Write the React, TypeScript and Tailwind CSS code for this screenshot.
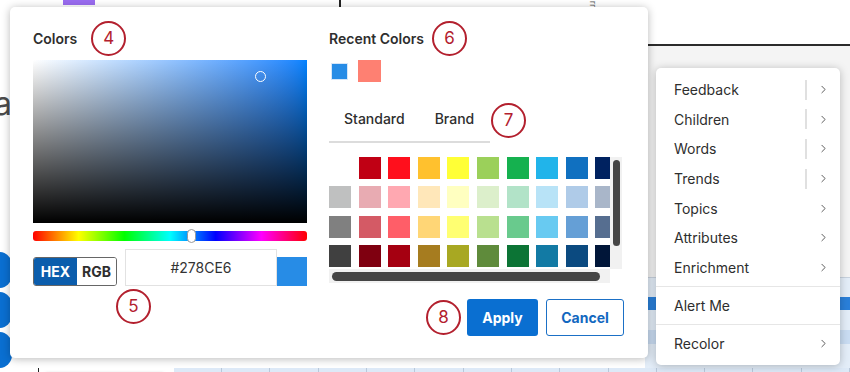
import { ChevronRight } from "lucide-react";

const palette: (string | null)[][] = [
  [null, "#c00014", "#ff0f1c", "#ffc12e", "#ffff36", "#9bd05a", "#15b14f", "#21b4ea", "#1070c0", "#002260"],
  ["#bfc0c0", "#e8abb2", "#ffa8b1", "#ffe7b9", "#ffffc0", "#dcefcb", "#b2e3c8", "#b8e3f7", "#afcbe8", "#a9b6c9"],
  ["#808080", "#d45a65", "#ff5e68", "#ffd676", "#ffff72", "#b9e08f", "#69ca8d", "#68caf1", "#659fd6", "#566e90"],
  ["#404040", "#7f0010", "#a50011", "#a67c1f", "#a8a822", "#5f8b3b", "#0c7435", "#127aa4", "#0b4a80", "#011639"],
];

const menuItems = [
  { label: "Feedback", bar: true, arrow: true },
  { label: "Children", bar: true, arrow: true },
  { label: "Words", bar: true, arrow: true },
  { label: "Trends", bar: true, arrow: true },
  { label: "Topics", bar: false, arrow: true },
  { label: "Attributes", bar: false, arrow: true },
  { label: "Enrichment", bar: false, arrow: true },
];

function Marker({ n }: { n: number }) {
  return (
    <div className="flex h-[35px] w-[35px] shrink-0 items-center justify-center rounded-full border-[2.5px] border-[#b3202e] text-[17px] leading-none text-[#b3202e]">
      {n}
    </div>
  );
}

function MenuRow({ label, bar, arrow }: { label: string; bar?: boolean; arrow?: boolean }) {
  return (
    <div className="flex h-[29.6px] items-center pl-[18px] pr-[10px] text-[14px] text-[#2e2e2e]">
      <span className="flex-1">{label}</span>
      {bar && <div className="mr-[10px] h-[20px] w-[2px] bg-[#e0e0e0]" />}
      {arrow && <ChevronRight size={13} strokeWidth={1.6} className="text-[#444]" />}
    </div>
  );
}

export default function App() {
  return (
    <div className="relative h-[372px] w-[850px] overflow-hidden bg-white font-['Inter',sans-serif]">
      {/* page behind */}
      <div className="flex h-full flex-col">
        <div className="flex h-[46px] shrink-0">
          <div className="flex w-[645px] items-start">
            <div className="ml-[63px] h-[5px] w-[32px] bg-[#9a6cf0]" />
            <div className="ml-[244px] h-[10px] w-[2px] bg-[#222]" />
            <span className="ml-[248px] mt-[1px] rotate-90 text-[8px] leading-none text-[#555]">rn</span>
          </div>
          <div className="flex-1 border-b-2 border-[#2b2b2b]" />
        </div>
        <div className="flex flex-1">
          <div className="flex w-[48px] flex-col">
            <span className="-ml-[6px] mt-[42px] text-[32px] leading-none text-[#4b4b4b]">a</span>
            <div className="mt-[132px] flex flex-col gap-[4px]">
              <div className="-ml-[14px] h-[36px] w-[26px] rounded-full bg-[#0a6fd1]" />
              <div className="-ml-[14px] h-[36px] w-[26px] rounded-full bg-[#0a6fd1]" />
              <div className="-ml-[14px] h-[36px] w-[26px] rounded-full bg-[#0a6fd1]" />
            </div>
          </div>
          <div className="flex-1" />
          <div className="flex w-[205px] flex-col bg-[#f4f4f4]">
            <div className="mt-[231px] flex flex-1 flex-col border-t border-[#c8d2de] bg-[#e3edf8]">
              <div className="mt-[19px] h-[13px] bg-[#2a7fd9]" />
              <div className="mt-[20px] h-[14px] bg-[#c9dcf2]" />
            </div>
          </div>
        </div>
        <div className="flex h-[14px] shrink-0">
          <div className="w-[48px]" />
          <div className="w-[2px] bg-[#222]" />
          <div className="ml-[6px] mt-[4px] h-[6px] w-[151px] rounded-sm bg-[#e6e6e6] blur-[1px]" />
          <div className="ml-[10px] flex flex-1 bg-[#dde9f7]">
            {Array.from({ length: 14 }).map((_, i) => (
              <div key={i} className="w-[48.3px] shrink-0 border-r border-[#b9c8da]" />
            ))}
          </div>
        </div>
      </div>

      {/* color dialog */}
      <div className="absolute left-[10px] top-[7px] flex h-[351px] w-[638px] gap-[22px] rounded-[5px] bg-white pl-[23px] pr-[24px] pt-[14px] shadow-[0_1px_8px_rgba(0,0,0,0.28)]">
        <div className="flex w-[274px] flex-col">
          <div className="flex items-center">
            <span className="text-[14px] font-semibold text-[#2e2e2e]">Colors</span>
            <div className="ml-[14px]">
              <Marker n={4} />
            </div>
          </div>
          <div className="relative mt-[4px] h-[163px] w-[274px] bg-linear-to-r from-white to-[#0082ff]">
            <div className="h-full w-full bg-linear-to-t from-black to-transparent" />
            <div className="absolute left-[222px] top-[11px] h-[11px] w-[11px] rounded-full border-[1.5px] border-white" />
          </div>
          <div className="relative mt-[8px] h-[10px] w-[274px] rounded-[3px] bg-[linear-gradient(to_right,#ff0000,#ff8000,#ffff00,#80ff00,#00ff00,#00ff80,#00ffff,#0080ff,#0000ff,#8000ff,#ff00ff,#ff0080,#ff0000)]">
            <div className="absolute -top-[2px] left-[154px] h-[14px] w-[9px] rounded-full border border-[#999] bg-white" />
          </div>
          <div className="mt-[8px] flex h-[37px] items-end">
            <div className="flex h-[29px] w-[84px] overflow-hidden rounded-[3px] border border-[#666] text-[14px] font-bold">
              <div className="flex w-[43px] items-center justify-center bg-[#0b5dac] text-white">HEX</div>
              <div className="flex flex-1 items-center justify-center bg-white text-[#2e2e2e]">RGB</div>
            </div>
            <div className="ml-[8px] flex h-[37px] w-[152px] items-center justify-center border border-[#e2e2e2] text-[14px] text-[#333]">
              #278CE6
            </div>
            <div className="h-[29px] w-[30px] bg-[#278ce6]" />
          </div>
          <div className="ml-[83px] mt-[3px]">
            <Marker n={5} />
          </div>
        </div>

        <div className="flex w-[295px] flex-col">
          <div className="flex items-center">
            <span className="text-[14px] font-semibold text-[#2e2e2e]">Recent Colors</span>
            <div className="ml-[8px]">
              <Marker n={6} />
            </div>
          </div>
          <div className="mt-[4px] flex h-[22px] items-center gap-[10px]">
            <div className="ml-[2px] h-[17px] w-[17px] border border-[#d6e6f8] bg-[#278ce6]" />
            <div className="h-[22px] w-[23px] bg-[#fe8072]" />
          </div>
          <div className="mt-[15px] flex items-center">
            <div className="flex h-[46px] w-[161px] items-center gap-[30px] border-b-2 border-[#dcdcdc] pb-[2px] pl-[15px] text-[14px] font-medium text-[#2e2e2e]">
              <span>Standard</span>
              <span>Brand</span>
            </div>
            <div className="ml-[1px]">
              <Marker n={7} />
            </div>
          </div>
          <div className="mt-[14px] flex w-[293px] flex-col">
            <div className="flex">
              <div className="h-[112px] w-[281px] overflow-hidden">
                <div className="flex w-[320px] flex-col gap-[7.4px]">
                  {palette.map((row, r) => (
                    <div key={r} className="flex gap-[7.6px]">
                      {row.map((c, i) =>
                        c ? (
                          <div key={i} className="h-[22px] w-[22px] shrink-0" style={{ backgroundColor: c }} />
                        ) : (
                          <div key={i} className="h-[22px] w-[22px] shrink-0" />
                        )
                      )}
                    </div>
                  ))}
                </div>
              </div>
              <div className="flex h-[112px] w-[12px] justify-center bg-[#f1f1f1] pt-[3px]">
                <div className="h-[86px] w-[7px] rounded-full bg-[#454545]" />
              </div>
            </div>
            <div className="flex h-[14px] w-[281px] items-center bg-[#f1f1f1] pl-[3px]">
              <div className="h-[9px] w-[268px] rounded-full bg-[#454545]" />
            </div>
          </div>
          <div className="mt-[16px] flex items-center justify-end">
            <Marker n={8} />
            <button className="ml-[6px] h-[37px] w-[71px] rounded-[3px] bg-[#0a6fd1] text-[14px] font-bold text-white">
              Apply
            </button>
            <button className="ml-[8px] h-[37px] w-[78px] rounded-[3px] border border-[#1b70c6] bg-white text-[14px] font-bold text-[#1268c0]">
              Cancel
            </button>
          </div>
        </div>
      </div>

      {/* context menu */}
      <div className="absolute left-[656px] top-[68px] flex h-[297px] w-[184px] flex-col rounded-[5px] bg-white pt-[7px] shadow-[0_1px_8px_rgba(0,0,0,0.25)]">
        {menuItems.map((m) => (
          <MenuRow key={m.label} label={m.label} bar={m.bar} arrow={m.arrow} />
        ))}
        <div className="mt-[4px] h-px bg-[#e6e6e6]" />
        <div className="mt-[4px]">
          <MenuRow label="Alert Me" />
        </div>
        <div className="mt-[3px] h-px bg-[#e6e6e6]" />
        <div className="mt-[4px]">
          <MenuRow label="Recolor" arrow />
        </div>
      </div>
    </div>
  );
}
